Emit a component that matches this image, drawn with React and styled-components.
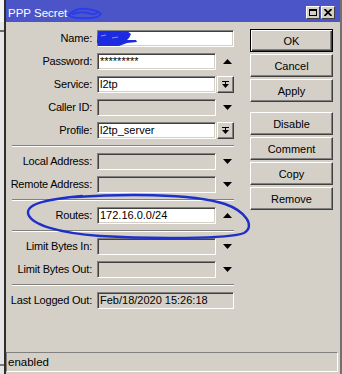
import React from 'react';
import styled, { createGlobalStyle } from 'styled-components';

const Global = createGlobalStyle`
  html, body { margin: 0; padding: 0; background: #d4d0c8; }
  body {
    width: 342px; height: 374px; overflow: hidden;
    font-family: "Liberation Sans", Arial, sans-serif;
    font-size: 11px; color: #000;
  }
`;

const Page = styled.div`
  position: relative;
  display: flex;
  height: 374px;
`;

const Gutter = styled.div`
  width: 4px;
  flex: none;
  background:
    linear-gradient(#f4f4f4 0 22px, #e6e6e6 22px 30px, #6a6a6a 30px 32px, #e6e6e6 32px 364px, #7a7a7a 364px 366px, #e6e6e6 366px);
`;

const Window = styled.div`
  flex: 1;
  display: flex;
  flex-direction: column;
  border-left: 2px solid #2e2e2e;
  border-right: 2px solid #707070;
  background: #d4d0c8;
`;

const TitleBar = styled.div`
  height: 22px;
  flex: none;
  display: flex;
  align-items: flex-end;
  background: #4c55c8;
  padding: 0 5px 0 2px;
`;

const Title = styled.div`
  color: #fff;
  font-size: 11.5px;
  line-height: 14px;
  padding-bottom: 2px;
`;

const TitleButtons = styled.div`
  margin-left: auto;
  display: flex;
  gap: 1px;
  margin-bottom: 3px;
`;

const TitleBtn = styled.div`
  box-sizing: border-box;
  width: 14px;
  height: 13px;
  background: #d4d0c8;
  border: 1px solid;
  border-color: #fff #404040 #404040 #fff;
  display: flex;
  align-items: center;
  justify-content: center;
`;

const Body = styled.div`
  flex: 1;
  display: flex;
`;

const Form = styled.div`
  width: 228px;
  flex: none;
  padding-top: 8px;
  display: flex;
  flex-direction: column;
`;

const Section = styled.div`
  display: flex;
  flex-direction: column;
  gap: 6px;
`;

const Separator = styled.div`
  height: 0;
  border-top: 1px solid #808080;
  border-bottom: 1px solid #fff;
  margin: 6px 0 6px 6px;
`;

const Row = styled.div`
  display: grid;
  grid-template-columns: 86px 137px;
  column-gap: 5px;
  height: 17px;
`;

const Label = styled.div`
  text-align: right;
  line-height: 17px;
  white-space: nowrap;
  letter-spacing: -0.2px;
`;

const FieldWrap = styled.div`
  display: flex;
  gap: 1px;
`;

const Box = styled.div`
  box-sizing: border-box;
  flex: 1;
  min-width: 0;
  height: 17px;
  border: 1px solid;
  border-color: #808080 #fff #fff #808080;
  box-shadow: inset 1px 1px 0 #404040, inset -1px -1px 0 #d4d0c8;
  background: ${p => (p.$disabled ? '#d4d0c8' : '#fff')};
  padding-left: 2px;
  line-height: 15px;
  white-space: nowrap;
  overflow: hidden;
`;

const Adorn = styled.div`
  width: 17px;
  flex: none;
  display: flex;
  align-items: center;
  padding-left: 6px;
  box-sizing: border-box;
`;

const DropBtn = styled.div`
  box-sizing: border-box;
  width: 17px;
  height: 17px;
  flex: none;
  border: 1px solid;
  border-color: #fff #404040 #404040 #fff;
  box-shadow: inset -1px -1px 0 #808080;
  display: flex;
  align-items: center;
  justify-content: center;
`;

const ButtonCol = styled.div`
  width: 83px;
  margin-left: 16px;
  padding-top: 7px;
  display: flex;
  flex-direction: column;
  gap: 2px;
`;

const Button = styled.div`
  box-sizing: border-box;
  height: 23px;
  display: flex;
  align-items: center;
  justify-content: center;
  border: 1px solid;
  border-color: ${p => (p.$default ? '#000' : '#fff #404040 #404040 #fff')};
  box-shadow: ${p =>
    p.$default
      ? 'inset 1px 1px 0 #fff, inset -1px -1px 0 #404040, inset -2px -2px 0 #808080'
      : 'inset -1px -1px 0 #808080'};
  margin-top: ${p => (p.$gapBefore ? '8px' : '0')};
  font-size: 11px;
`;

const StatusBar = styled.div`
  box-sizing: border-box;
  height: 20px;
  margin: auto 2px 2px 0;
  border: 1px solid;
  border-color: #808080 #fff #fff #808080;
  padding-left: 1px;
  line-height: 18px;
  font-size: 11.5px;
`;

const Overlay = styled.svg`
  position: absolute;
  left: 0;
  top: 0;
  pointer-events: none;
`;

const UpArrow = () => (
  <svg width="9" height="5" viewBox="0 0 9 5"><path d="M0 5 L4.5 0 L9 5 Z" fill="#000" /></svg>
);
const DownArrow = () => (
  <svg width="9" height="5" viewBox="0 0 9 5"><path d="M0 0 L9 0 L4.5 5 Z" fill="#000" /></svg>
);
const DropIcon = () => (
  <svg width="7" height="8" viewBox="0 0 7 8">
    <rect x="0" y="0" width="7" height="1" fill="#000" />
    <rect x="3" y="1" width="1" height="3" fill="#000" />
    <path d="M0 3 L7 3 L3.5 7 Z" fill="#000" />
  </svg>
);

const Field = ({ label, value, disabled, adorn }) => (
  <Row>
    <Label>{label}</Label>
    <FieldWrap>
      <Box $disabled={disabled}>{value}</Box>
      {adorn === 'up' && <Adorn><UpArrow /></Adorn>}
      {adorn === 'down' && <Adorn><DownArrow /></Adorn>}
      {adorn === 'drop' && <DropBtn><DropIcon /></DropBtn>}
    </FieldWrap>
  </Row>
);

export default function App() {
  return (
    <>
      <Global />
      <Page>
        <Gutter />
        <Window>
          <TitleBar>
            <Title>PPP Secret</Title>
            <TitleButtons>
              <TitleBtn>
                <svg width="8" height="7" viewBox="0 0 8 7">
                  <rect x="0.5" y="0.5" width="7" height="6" fill="none" stroke="#000" />
                  <rect x="0" y="0" width="8" height="2" fill="#000" />
                </svg>
              </TitleBtn>
              <TitleBtn>
                <svg width="8" height="7" viewBox="0 0 8 7">
                  <path d="M0.5 0 L7.5 7 M7.5 0 L0.5 7" stroke="#000" strokeWidth="1.8" />
                </svg>
              </TitleBtn>
            </TitleButtons>
          </TitleBar>
          <Body>
            <Form>
              <Section>
                <Field label="Name:" value="" />
                <Field label="Password:" value="*********" adorn="up" />
                <Field label="Service:" value="l2tp" adorn="drop" />
                <Field label="Caller ID:" value="" disabled adorn="down" />
                <Field label="Profile:" value="l2tp_server" adorn="drop" />
              </Section>
              <Separator />
              <Section>
                <Field label="Local Address:" value="" disabled adorn="down" />
                <Field label="Remote Address:" value="" disabled adorn="down" />
              </Section>
              <Separator />
              <Section>
                <Field label="Routes:" value="172.16.0.0/24" adorn="up" />
              </Section>
              <Separator />
              <Section>
                <Field label="Limit Bytes In:" value="" disabled adorn="down" />
                <Field label="Limit Bytes Out:" value="" disabled adorn="down" />
              </Section>
              <Separator />
              <Section>
                <Field label="Last Logged Out:" value="Feb/18/2020 15:26:18" disabled />
              </Section>
            </Form>
            <ButtonCol>
              <Button $default>OK</Button>
              <Button>Cancel</Button>
              <Button>Apply</Button>
              <Button $gapBefore>Disable</Button>
              <Button>Comment</Button>
              <Button>Copy</Button>
              <Button>Remove</Button>
            </ButtonCol>
          </Body>
          <StatusBar>enabled</StatusBar>
        </Window>
        <Overlay width="342" height="374" viewBox="0 0 342 374">
          <path
            d="M70 14 Q76 8 86 9 Q97 10 101 14 Q97 19 85 18 Q74 19 68 15 M73 14 Q80 11 88 13 Q94 15 97 13"
            fill="none" stroke="#2a3cf0" strokeWidth="2" strokeLinecap="round"
          />
          <path
            d="M98 32 L112 31 L127 31 L131 34 L129 38 L127 40 L136 40 L137 42 L127 43 L119 46 L104 46 L99 46 L97 42 Z"
            fill="#1c2ae0"
          />
          <path d="M101 36 L106 35 M112 38 L118 37" stroke="#8a94f4" strokeWidth="1" />
          <path
            d="M75 197 C120 194, 190 193, 225 204 C245 211, 256 226, 244 233 C230 239, 150 239, 100 236 C60 233, 30 225, 28 213 C27 203, 50 199, 82 196"
            fill="none" stroke="#1e30c8" strokeWidth="2.4" strokeLinecap="round"
          />
        </Overlay>
      </Page>
    </>
  );
}
